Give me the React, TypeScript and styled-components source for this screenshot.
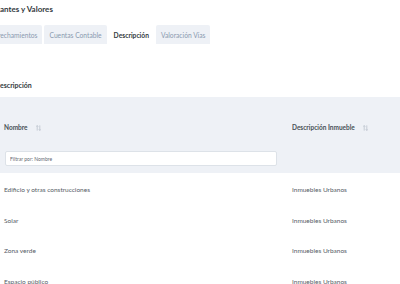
import styled, { createGlobalStyle } from "styled-components";

const GlobalStyle = createGlobalStyle`
    html, body {
        margin: 0;
        padding: 0;
        background: #fff;
        overflow: hidden;
    }
    body {
        font-family: Lato, "Liberation Sans", sans-serif;
        color: #343a40;
    }
`

const Page = styled.div`
    width: 400px;
    height: 284px;
    overflow: hidden;
`

const Title = styled.h2`
    margin: 0;
    padding-top: 4px;
    font-size: 8px;
    line-height: 10px;
    font-weight: 700;
    color: #343a40;
`

const TabList = styled.div`
    display: flex;
    gap: 2px;
    margin-top: 11px;
    margin-left: -7px;
`

const Tab = styled.div<{ $active?: boolean }>`
    height: 19px;
    padding: 0 5px;
    display: flex;
    align-items: center;
    font-size: 6.7px;
    font-weight: ${p => (p.$active ? 700 : 400)};
    color: ${p => (p.$active ? "#343a40" : "#8a9ab0")};
    background: ${p => (p.$active ? "#fff" : "#eef1f6")};
    border-radius: 2px 2px 0 0;
`

const SectionLabel = styled.div`
    margin-top: 36px;
    font-size: 7px;
    line-height: 10px;
    font-weight: 700;
    color: #343a40;
`

const Table = styled.div`
    margin-top: 7px;
`

const Head = styled.div`
    background: #eef1f6;
    padding-bottom: 7px;
`

const HeadRow = styled.div`
    display: grid;
    grid-template-columns: 288px 1fr;
    height: 36px;
    align-items: end;
`

const HeadCell = styled.div`
    display: flex;
    align-items: center;
    gap: 8px;
    padding-left: 4px;
    font-size: 6.5px;
    line-height: 10px;
    font-weight: 700;
    color: #495057;
`

const FilterRow = styled.div`
    display: grid;
    grid-template-columns: 288px 1fr;
    padding-top: 18px;
`

const FilterInput = styled.input`
    margin-left: 5px;
    width: 272px;
    height: 15px;
    box-sizing: border-box;
    border: 1px solid #dde2e8;
    border-radius: 2px;
    background: #fff;
    padding: 0 4px;
    font-family: Lato, "Liberation Sans", sans-serif;
    font-size: 5px;
    outline: none;
    &::placeholder {
        color: #5f6770;
    }
`

const Body = styled.div`
    padding-top: 2px;
`

const Row = styled.div`
    display: grid;
    grid-template-columns: 288px 1fr;
    height: 30.5px;
    align-items: center;
`

const Cell = styled.div`
    padding-left: 4px;
    font-size: 6.5px;
    line-height: 10px;
    color: #555c66;
`

function SortIcon() {
    return (
        <svg width="5" height="6" viewBox="0 0 5 6" fill="none" stroke="#a7b1bd" strokeWidth="0.6">
            <path d="M1.2 5.6V0.6M0.2 1.6L1.2 0.6L2.2 1.6" />
            <path d="M3.8 0.4V5.4M2.8 4.4L3.8 5.4L4.8 4.4" />
        </svg>
    )
}

const rows = [
    "Edificio y otras construcciones",
    "Solar",
    "Zona verde",
    "Espacio público",
]

export default function App() {
    return (
        <Page>
            <GlobalStyle />
            <Title>antes y Valores</Title>
            <TabList>
                <Tab>rechamientos</Tab>
                <Tab>Cuentas Contable</Tab>
                <Tab $active>Descripción</Tab>
                <Tab>Valoración Vías</Tab>
            </TabList>

            <SectionLabel>escripción</SectionLabel>

            <Table>
                <Head>
                    <HeadRow>
                        <HeadCell>Nombre <SortIcon /></HeadCell>
                        <HeadCell>Descripción Inmueble <SortIcon /></HeadCell>
                    </HeadRow>
                    <FilterRow>
                        <FilterInput placeholder="Filtrar por: Nombre" />
                        <div />
                    </FilterRow>
                </Head>
                <Body>
                    {rows.map(name => (
                        <Row key={name}>
                            <Cell>{name}</Cell>
                            <Cell>Inmuebles Urbanos</Cell>
                        </Row>
                    ))}
                </Body>
            </Table>
        </Page>
    )
}
